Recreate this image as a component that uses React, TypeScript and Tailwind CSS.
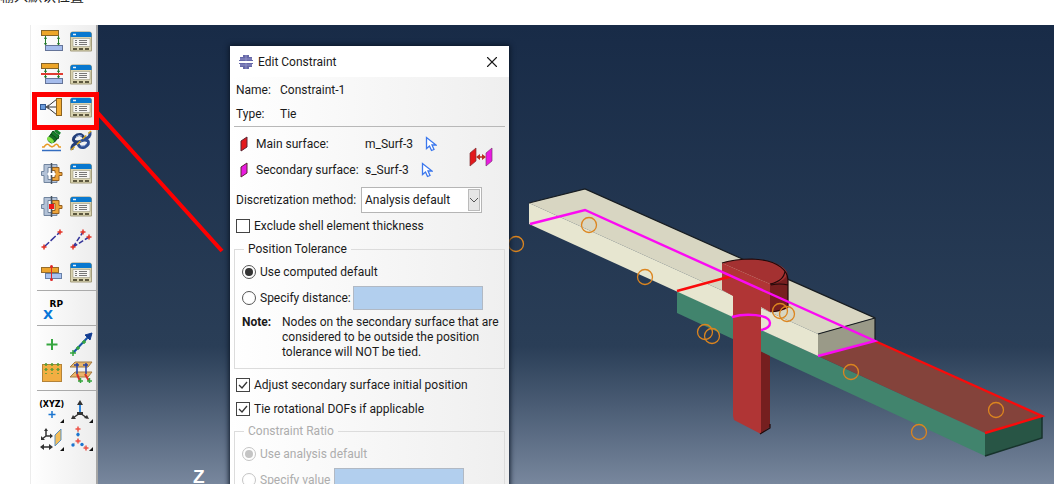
import { useState, type ReactNode } from "react";
import { X } from "lucide-react";

/* ── Toolbar icons ── */

function Icon({ children }: { children: ReactNode }) {
  return (
    <svg viewBox="0 0 24 24" className="h-6 w-6 overflow-visible" fill="none" aria-hidden="true">
      {children}
    </svg>
  );
}

function ManagerIcon() {
  return (
    <Icon>
      <path d="M1.500 4q0-2 2-2h17q2 0 2 2v17h-21z" fill="#d9d3b0" stroke="#a39c7c" />
      <path d="M1.500 7V4q0-2 2-2h17q2 0 2 2v3z" fill="#0878cf" />
      <path d="M4 4.500h3" stroke="#e3f1fc" strokeWidth="1.500" />
      <path d="M4 8.500h17v8H4z" fill="#f7f7f4" stroke="#8e8a72" strokeWidth=".5" />
      <path d="M6 10.500h2M6 12.500h2M6 14.500h2M10 10.500h8M10 12.500h8M10 14.500h8" stroke="#777" />
      <path d="M4 18h4v2H4zM10 18h4v2h-4zM16 18h4v2h-4z" fill="#5d583f" />
    </Icon>
  );
}

function InteractionIcon({ blocked = false }: { blocked?: boolean }) {
  return (
    <Icon>
      <path d="M5.500 6v10M18.500 6v10" stroke="#247a2c" />
      <path d="m4 9 1.500-3L7 9zM4 13l1.500 3L7 13zM17 9l1.500-3L20 9zM17 13l1.500 3 1.500-3z" fill="#247a2c" />
      <rect x="1.500" y=".5" width="17" height="5" fill="#eda528" stroke="#846329" />
      <rect x="5.500" y="15.500" width="17" height="5" fill="#a5bcec" stroke="#657498" />
      {blocked && <path d="M1 11h22" stroke="#e03c32" strokeWidth="2" />}
    </Icon>
  );
}

function CouplingIcon() {
  return (
    <Icon>
      <path d="M4 11h13M7 11 17 3M7 11l10 8" stroke="#333" />
      <rect x=".5" y="8.500" width="5" height="5" fill="#6a9bdc" stroke="#345a91" />
      <path d="m5 11 4-2.500v5z" fill="#555" />
      <rect x="16.500" y="2.500" width="5" height="17" fill="#f2ad35" stroke="#8b6220" />
    </Icon>
  );
}

function FlashlightIcon() {
  return (
    <Icon>
      <path d="m13 2 6 5-1 3-7-5z" fill="#15802a" stroke="#0c4b18" />
      <path d="m15 1 5 4" stroke="#15802a" strokeWidth="3" />
      <path d="m11 5 6 5q-2 4-6 4-4-2-3-5z" fill="#166d25" stroke="#0c4b18" />
      <ellipse cx="10.500" cy="11" rx="4" ry="2" transform="rotate(40 10.500 11)" fill="#7ee044" />
      <path d="M2 18h2q3-5 6-1l2 1 2-1q3-4 5 1h2" stroke="#e89a27" strokeWidth="1.500" />
      <path d="M2 21.500h19" stroke="#346dc0" strokeWidth="1.500" />
    </Icon>
  );
}

function LinksIcon() {
  return (
    <Icon>
      <path d="M15 9q-2-5-7-3-5 3-3 6 3 2 7 0M9 14q-7 1-6 7" stroke="#233e78" strokeWidth="3" />
      <path d="M9 15q2 5 7 3 5-3 3-6-3-2-7 0M15 10q7-1 6-7" stroke="#2d4d91" strokeWidth="3" />
      <path d="M13 7q-3-2-6 1M12 17q4 1 6-3" stroke="#90a9df" />
      <path d="M2 21 22 2" stroke="#d4a51f" strokeWidth="1.500" strokeDasharray="5 3" />
    </Icon>
  );
}

function ClampIcon({ dot = false }: { dot?: boolean }) {
  return (
    <Icon>
      <path d="M17 2.500H4v7H1.500v4H4v7h13v-3H8v-12h9z" fill="#b3c2d7" stroke="#71849e" />
      <path d="M12 5.500h7v5h3v3h-3v5h-7v-3h3v-7h-3z" fill="#eda43a" stroke="#956022" />
      <path d="M11.500 1v21" stroke="#45515e" strokeWidth="1.500" />
      {dot ? (
        <rect x="9" y="9" width="5" height="5" fill="#ed1717" />
      ) : (
        <path d="m7 12 3-3v2h3V9l3 3-3 3v-2h-3v2z" fill="#fff" />
      )}
    </Icon>
  );
}

function WireIcon({ branch = false }: { branch?: boolean }) {
  return (
    <Icon>
      {branch ? (
        <>
          <path d="M4 19 14 4M4 19 20 9" stroke="#35359a" strokeWidth="1.500" strokeDasharray="5 2" />
          <path d="M11.500 4h5M14 1.500v5M17.500 9h5M20 6.500v5M1.500 19h5M4 16.500v5" stroke="#e33427" strokeWidth="1.500" />
        </>
      ) : (
        <>
          <path d="M4 19 20 4" stroke="#35359a" strokeWidth="1.500" strokeDasharray="7 2" />
          <path d="M17.500 4h5M20 1.500v5M1.500 19h5M4 16.500v5" stroke="#e33427" strokeWidth="1.500" />
        </>
      )}
    </Icon>
  );
}

function FastenerIcon() {
  return (
    <Icon>
      <rect x="1.500" y="6.500" width="17" height="5" fill="#eda42c" stroke="#956c2c" />
      <rect x="5.500" y="12.500" width="16" height="5" fill="#a9c3f0" stroke="#6880a7" />
      <path d="M11.500 5v14" stroke="#e02828" />
      <circle cx="11.500" cy="5.500" r="1.500" fill="#e02828" />
      <circle cx="11.500" cy="18.500" r="1.500" fill="#e02828" />
    </Icon>
  );
}

function PlusIcon() {
  return (
    <Icon>
      <path d="M12 7v11M6.500 12.500h11" stroke="#36a640" strokeWidth="2" />
    </Icon>
  );
}

function VectorIcon() {
  return (
    <Icon>
      <path d="M4 21 20 4" stroke="#1955a5" strokeWidth="2" />
      <path d="m23 1-2 7-5-5z" fill="#123c91" stroke="#123c91" />
      <path d="M1 21h6M4 18v6M7 16h4M9 14v4M13 10h4M15 8v4" stroke="#36a640" strokeWidth="1.500" />
    </Icon>
  );
}

function GridPlaneIcon() {
  return (
    <Icon>
      <rect x="2.500" y="4.500" width="19" height="17" fill="#f2ae42" stroke="#b48339" />
      <path d="M6 3v11M12 3v11M18 3v11" stroke="#549b35" strokeDasharray="3 2" strokeWidth="1.500" />
      <path d="M4 4.500h16M4 9.500h16" stroke="#549b35" strokeDasharray="4 2" strokeOpacity=".6" />
    </Icon>
  );
}

function StackedPlanesIcon() {
  return (
    <Icon>
      <path d="M6 2h17l-4 5H1zM6 12h17l-4 5H1z" fill="#e8b66b" stroke="#a57b43" />
      <path d="M8 3v11M17 3v11M5 5h5M14 5h5" stroke="#243fa2" strokeWidth="1.500" />
      <path d="m8 14 3 7M16 14l4 7" stroke="#d73329" strokeWidth="2" />
      <path d="M9 21h5M11.500 18v5M18 21h5M20.500 18v5" stroke="#36a640" strokeWidth="1.500" />
    </Icon>
  );
}

function Corner() {
  return <path d="M24 20v4h-4z" fill="#111" />;
}

function TriadIcon() {
  return (
    <Icon>
      <path d="M11 15V3" stroke="#348be3" strokeWidth="2" />
      <path d="m8 6 3-5 3 5z" fill="#333" />
      <path d="m11 14-7 5M11 14l7 5" stroke="#333" strokeWidth="1.500" />
      <path d="m2 20 2-4 3 4zM20 20l-5-1 3-3zM8 13h6v3H8z" fill="#333" />
      <Corner />
    </Icon>
  );
}

function DatumPlaneIcon() {
  return (
    <Icon>
      <path d="m15 8 6-6v11l-6 6z" fill="#f2bd5a" stroke="#5e91bd" />
      <path d="M6 3v6h6M6 9l-4 3M2 20h9" stroke="#333" strokeWidth="1.500" />
      <path d="m4 4 2-3 2 3zM10 6.500 13 9l-3 2.500zM1 9v4h4zM4 17l-4 3 4 3zM9 17l4 3-4 3z" fill="#333" />
      <Corner />
    </Icon>
  );
}

function DatumPointsIcon() {
  return (
    <Icon>
      <path d="M9 14V2M9 14l-6 4M9 14l8 7" stroke="#aaa" strokeDasharray="2 2" />
      <path d="M6.500 2h5M9-.5v5M6.500 14h5M9 11.500v5M14.500 21h5M17 18.500v5" stroke="#ed5147" strokeWidth="1.500" />
      <circle cx="9" cy="7.500" r="1.700" fill="#1b75d0" />
      <circle cx="4" cy="18" r="1.700" fill="#1b75d0" />
      <circle cx="13" cy="17.500" r="1.700" fill="#1b75d0" />
      <Corner />
    </Icon>
  );
}

type Tool = { label: string; icon: ReactNode };

const INTERACTION_TOOLS: Tool[] = [
  { label: "Create interaction", icon: <InteractionIcon /> },
  { label: "Interaction manager", icon: <ManagerIcon /> },
  { label: "Create interaction property", icon: <InteractionIcon blocked /> },
  { label: "Interaction property manager", icon: <ManagerIcon /> },
  { label: "Create constraint", icon: <CouplingIcon /> },
  { label: "Constraint manager", icon: <ManagerIcon /> },
  { label: "Find contact pairs", icon: <FlashlightIcon /> },
  { label: "Links", icon: <LinksIcon /> },
  { label: "Create connector section", icon: <ClampIcon /> },
  { label: "Connector section manager", icon: <ManagerIcon /> },
  { label: "Create connector assignment", icon: <ClampIcon dot /> },
  { label: "Connector assignment manager", icon: <ManagerIcon /> },
  { label: "Create wire feature", icon: <WireIcon /> },
  { label: "Modify wire feature", icon: <WireIcon branch /> },
  { label: "Create fasteners", icon: <FastenerIcon /> },
  { label: "Fasteners manager", icon: <ManagerIcon /> },
];

const ATTACHMENT_TOOLS: Tool[] = [
  { label: "Attachment point", icon: <PlusIcon /> },
  { label: "Points along direction", icon: <VectorIcon /> },
  { label: "Points from pattern", icon: <GridPlaneIcon /> },
  { label: "Attachment lines", icon: <StackedPlanesIcon /> },
];

function ToolButton({ tool }: { tool: Tool }) {
  return (
    <button type="button" aria-label={tool.label} className="flex items-center justify-center">
      {tool.icon}
    </button>
  );
}

function Toolbar() {
  return (
    <nav className="flex w-[68px] shrink-0 flex-col border-r-2 border-l border-r-[#a6a6a6] border-l-[#ececec] bg-linear-to-r from-white to-[#ededed] pl-1.5">
      <div className="grid h-[265px] auto-rows-fr grid-cols-2 gap-x-1 px-0.5">
        {INTERACTION_TOOLS.map((t) => (
          <ToolButton key={t.label} tool={t} />
        ))}
      </div>
      <div className="flex h-9 border-y border-[#aaa] pt-2 pl-1.5">
        <button
          type="button"
          className="flex w-5 flex-col font-['DejaVu_Sans',sans-serif] text-[9px] leading-[10px] font-bold"
        >
          <span className="self-end">RP</span>
          <span className="self-start text-[13px] leading-3 text-[#0876d8]">X</span>
        </button>
      </div>
      <div className="grid h-16 grid-cols-2 gap-x-1 px-0.5 py-1">
        {ATTACHMENT_TOOLS.map((t) => (
          <ToolButton key={t.label} tool={t} />
        ))}
      </div>
      <div className="grid grid-cols-2 gap-x-1 gap-y-1 border-t border-[#aaa] px-0.5 pt-2">
        <button
          type="button"
          className="flex h-6 flex-col items-center font-['DejaVu_Sans',sans-serif] text-[8px] leading-3 font-bold"
        >
          (XYZ)
          <svg viewBox="0 0 24 12" className="h-3 w-6 shrink-0" aria-hidden="true">
            <path d="M12 0v7M8.500 3.500h7" stroke="#1b75d0" strokeWidth="1.500" />
            <path d="M24 8v4h-4z" fill="#111" />
          </svg>
        </button>
        <ToolButton tool={{ label: "Create datum axes", icon: <TriadIcon /> }} />
        <ToolButton tool={{ label: "Create datum plane", icon: <DatumPlaneIcon /> }} />
        <ToolButton tool={{ label: "Create datum points", icon: <DatumPointsIcon /> }} />
      </div>
    </nav>
  );
}

/* ── 3D viewport ── */

const MARKERS = [
  [516, 244],
  [589, 225],
  [645, 277],
  [705, 332],
  [712, 336],
  [780, 311],
  [787, 314],
  [851, 372],
  [919, 432],
  [996, 410],
];

function Viewport() {
  return (
    <main className="min-w-0 flex-1 bg-linear-to-b from-[#182b47] via-[#2a3e57] via-70% to-[#78879d]">
      <svg viewBox="98 25 956 459" className="block w-full" role="img" aria-label="Assembly">
        {/* lower plate */}
        <path d="M677 291 985 433V456L677 313z" fill="#41846d" />
        <path d="m985 433 57-17v22l-57 18z" fill="#285545" />
        <path d="m985 456 57-18v-22" fill="none" stroke="#17332c" strokeWidth="1.500" />
        <path d="m818 356 57-15 167 75-57 17z" fill="#84433b" />
        {/* upper plate */}
        <path d="m529 203 56-14 290 129-57 16z" fill="#d8d6c2" />
        <path d="m529 203 289 131v22L529 224z" fill="#e7e6d0" />
        <path d="m818 334 57-16v23l-57 15z" fill="#9a9a88" />
        <path d="m529 203 56-14 290 129v23M818 334l57-16" fill="none" stroke="#171c20" strokeWidth="1.200" />
        {/* pin */}
        <path d="m760 351 10 5v71l-10 7z" fill="#751f1f" />
        <path d="M770 283q14-3 17-12l1 9v28q-7 4-18 4z" fill="#771f1f" />
        <path d="M722 263q13-4 30-4c22 1 35 8 35 15q-2 8-17 10z" fill="#a43131" />
        <path d="m722 263 48 21v28l-9-5v127l-27-14-1-4V296l-11-6z" fill="#b03535" />
        <path
          d="M722 263q13-4 30-4c28 1 36 13 36 21v27q-8 4-16 5M770 284q14-3 15-13M771 285q9-2 17 0M760 434l10-6v-4"
          fill="none"
          stroke="#210909"
          strokeWidth="1.200"
        />
        {/* surface edges */}
        <g fill="none" strokeWidth="2.400">
          <path d="m677 291 55-15M875 341l167 75-57 17" stroke="#fa0b0b" />
          <path d="m530 224 55-14 290 131-57 15M732 317c13-4 38-3 38 6q0 5-9 7" stroke="#fb0af3" />
        </g>
        <g fill="none" stroke="#dc851f" strokeWidth="1.300">
          {MARKERS.map(([cx, cy]) => (
            <circle key={cx} cx={cx} cy={cy} r="7.500" />
          ))}
        </g>
        <text x="193" y="483" fill="#fff" fontFamily="Liberation Sans, sans-serif" fontSize="19" fontWeight="700">
          Z
        </text>
      </svg>
    </main>
  );
}

/* ── Dialog ── */

function CheckRow({ label, defaultChecked = false, tall = false }: { label: string; defaultChecked?: boolean; tall?: boolean }) {
  return (
    <label className={`flex items-center gap-1 px-0.5 ${tall ? "h-[26px]" : "h-6"}`}>
      <span className="relative h-3.5 w-3.5">
        <input
          type="checkbox"
          defaultChecked={defaultChecked}
          className="peer block h-3.5 w-3.5 appearance-none border border-[#444] bg-white"
        />
        <svg
          viewBox="0 0 14 14"
          className="pointer-events-none invisible absolute inset-0 peer-checked:visible"
          aria-hidden="true"
        >
          <path d="m3 7 3 3 5-6" fill="none" stroke="#333" strokeWidth="1.300" />
        </svg>
      </span>
      {label}
    </label>
  );
}

function Radio({ name, label, defaultChecked = false }: { name: string; label: string; defaultChecked?: boolean }) {
  return (
    <label className="flex shrink-0 items-center gap-1">
      <input
        type="radio"
        name={name}
        defaultChecked={defaultChecked}
        className="h-3.5 w-3.5 appearance-none rounded-full border border-[#555] bg-white bg-clip-content p-0.5 checked:bg-[#333] disabled:border-[#c4c4c4] disabled:checked:bg-[#c4c4c4]"
      />
      {label}
    </label>
  );
}

function SurfaceIcon({ color }: { color: string }) {
  return (
    <svg viewBox="0 0 8 16" className="h-4 w-2" aria-hidden="true">
      <path d="m1 5 6-4v10l-6 4z" fill={color} stroke="#5a2432" />
    </svg>
  );
}

function PickButton({ label }: { label: string }) {
  return (
    <button type="button" aria-label={label} className="ml-3">
      <svg viewBox="0 0 12 16" className="h-4 w-3" aria-hidden="true">
        <path d="M1.500 1.500v11l3-2.500 2 4.500 2.500-1-2-4.500h4z" fill="#fff" stroke="#3c78ed" strokeWidth="1.300" />
      </svg>
    </button>
  );
}

function EditConstraintDialog() {
  const [method, setMethod] = useState("Analysis default");

  return (
    <section
      role="dialog"
      aria-labelledby="dialog-title"
      className="absolute top-[21px] left-[230px] w-[279px] bg-white text-[#1a1a1a] shadow-[0_0_5px_1px_#0b1626]"
    >
      <header className="flex h-[31px] items-center gap-1 pr-2 pl-2">
        <svg viewBox="0 0 16 16" className="h-4 w-4" aria-hidden="true">
          <path d="M5 1h6v2h3v3h1v1H1V6h1V3h3zM1 9h14v1h-1v3h-3v2H5v-2H2v-3H1z" fill="#6668a8" />
          <path d="M2 5h12M2 11h12M8 1v6M8 9v6" stroke="#8e90c6" />
        </svg>
        <h1 id="dialog-title" className="flex-1">
          Edit Constraint
        </h1>
        <button type="button" aria-label="Close">
          <X size={18} strokeWidth={1.5} />
        </button>
      </header>

      <form className="bg-linear-to-r from-white to-[#efefef] px-1 pt-px">
        <dl className="px-0.5">
          <div className="flex h-6 items-center">
            <dt className="w-11">Name:</dt>
            <dd>Constraint-1</dd>
          </div>
          <div className="flex h-6 items-center">
            <dt className="w-11">Type:</dt>
            <dd>Tie</dd>
          </div>
        </dl>
        <hr className="border-[#b8b8b8]" />

        <div className="flex items-center justify-between pt-1 pr-3 pl-1.5">
          <div>
            <div className="flex h-[26px] items-center">
              <SurfaceIcon color="#e3191c" />
              <span className="ml-2 w-[109px] whitespace-nowrap">Main surface:</span>
              m_Surf-3
              <PickButton label="Edit main surface" />
            </div>
            <div className="flex h-[26px] items-center">
              <SurfaceIcon color="#e91be0" />
              <span className="ml-2 w-[109px] whitespace-nowrap">Secondary surface:</span>
              s_Surf-3
              <PickButton label="Edit secondary surface" />
            </div>
          </div>
          <button type="button" aria-label="Swap surfaces">
            <svg viewBox="0 0 24 20" className="h-5 w-6" aria-hidden="true">
              <path d="m1 6 6-5v13l-6 5z" fill="#e3191c" stroke="#7d3038" strokeWidth=".7" />
              <path d="m17 6 6-5v13l-6 5z" fill="#e91be0" stroke="#7d3872" strokeWidth=".7" />
              <path d="M9 10h6" stroke="#b92f20" strokeWidth="1.500" />
              <path d="m11 7-4 3 4 3zM13 7l4 3-4 3z" fill="#b92f20" />
            </svg>
          </button>
        </div>

        <div className="mt-1 flex h-[26px] items-center px-0.5">
          <label htmlFor="method" className="w-[125px] whitespace-nowrap">
            Discretization method:
          </label>
          <div className="relative">
            <select
              id="method"
              value={method}
              onChange={(e) => setMethod(e.target.value)}
              className="block h-[26px] w-[121px] appearance-none border border-[#b5b5b5] bg-white pl-[3px]"
            >
              <option>Analysis default</option>
              <option>Node to surface</option>
              <option>Surface to surface</option>
            </select>
            <span className="pointer-events-none absolute inset-y-0.5 right-0.5 flex w-3 items-center justify-center border border-[#bbb] bg-[#e6e6e6]">
              <svg viewBox="0 0 10 6" className="h-1.5 w-2.5" aria-hidden="true">
                <path d="m1 1 4 4 4-4" fill="none" stroke="#555" />
              </svg>
            </span>
          </div>
        </div>
        <CheckRow label="Exclude shell element thickness" tall />

        <fieldset className="mt-0.5 min-w-0 border border-[#dcdcdc] px-[7px] pt-0.5 pb-2">
          <legend className="ml-0.5 px-1 leading-4">Position Tolerance</legend>
          <div className="flex h-[26px] items-center">
            <Radio name="tolerance" label="Use computed default" defaultChecked />
          </div>
          <div className="flex h-[26px] items-center">
            <Radio name="tolerance" label="Specify distance:" />
            <input
              type="text"
              aria-label="Distance"
              className="ml-0.5 h-6 w-[130px] border border-[#b1b9c4] bg-[#b2cfee]"
            />
          </div>
          <p className="mt-1 flex leading-[15px]">
            <strong className="w-10 shrink-0">Note:</strong>
            <span className="whitespace-nowrap">
              Nodes on the secondary surface that are
              <br />
              considered to be outside the position
              <br />
              tolerance will NOT be tied.
            </span>
          </p>
        </fieldset>

        <div className="mt-1">
          <CheckRow label="Adjust secondary surface initial position" defaultChecked />
          <CheckRow label="Tie rotational DOFs if applicable" defaultChecked />
        </div>

        <fieldset
          disabled
          className="mt-0.5 min-w-0 border border-[#dcdcdc] px-[7px] pt-0.5 pb-2 text-[#adadad]"
        >
          <legend className="ml-0.5 px-1 leading-4">Constraint Ratio</legend>
          <div className="flex h-[26px] items-center">
            <Radio name="ratio" label="Use analysis default" defaultChecked />
          </div>
          <div className="flex h-[26px] items-center">
            <Radio name="ratio" label="Specify value" />
            <input
              type="text"
              aria-label="Ratio"
              className="ml-1 h-6 w-[130px] border border-[#b1b9c4] bg-[#b2cfee]"
            />
          </div>
        </fieldset>
      </form>
    </section>
  );
}

export default function App() {
  return (
    <div className="flex h-screen flex-col overflow-hidden bg-white font-[Roboto,'Open_Sans',sans-serif] text-[12px] leading-4">
      <div className="flex h-[25px] shrink-0 flex-col">
        <p className="flex h-[3px] items-end overflow-hidden font-['Noto_Sans_CJK_SC',sans-serif] text-[14px] leading-4 text-[#222]">
          输入默认位置
        </p>
      </div>
      <div className="relative flex min-h-0 flex-1 pr-2.5 pl-[30px]">
        <Toolbar />
        <Viewport />
        <EditConstraintDialog />
        {/* callout */}
        <div className="pointer-events-none absolute top-[67px] left-8 h-[38px] w-[67px] border-5 border-[#fe0000]" />
        <svg
          viewBox="0 0 130 145"
          className="pointer-events-none absolute top-[85px] left-24 h-[145px] w-[130px]"
          aria-hidden="true"
        >
          <path d="M1 2 126 141" stroke="#fe0000" strokeWidth="4" />
        </svg>
      </div>
    </div>
  );
}
